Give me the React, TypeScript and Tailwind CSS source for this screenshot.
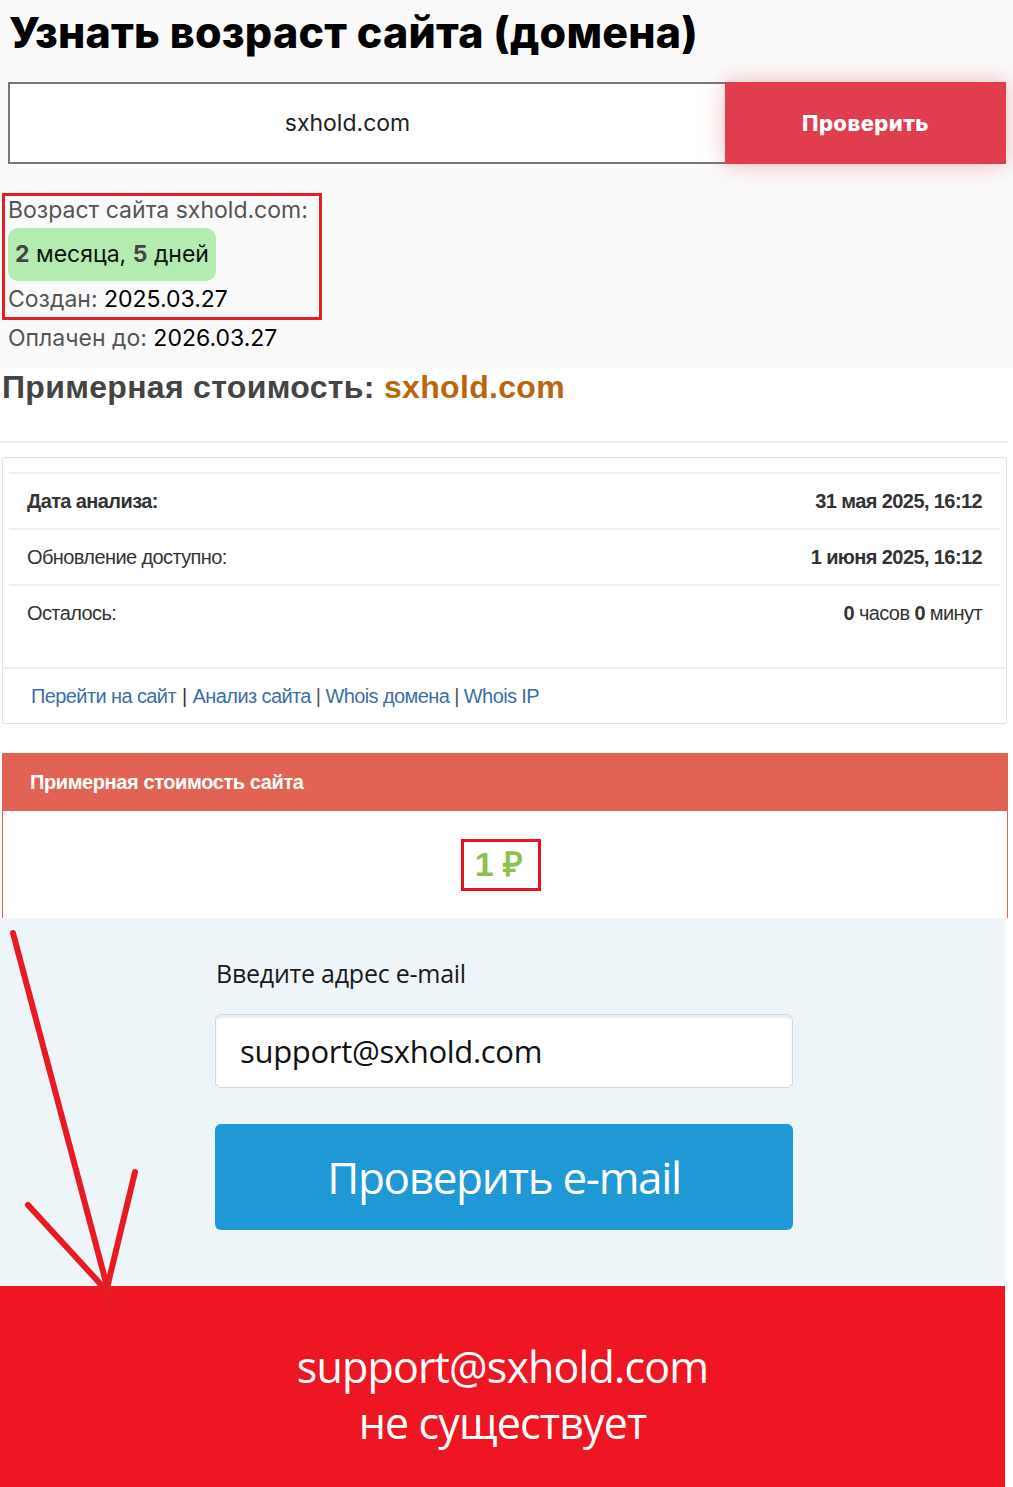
import React from 'react';

const rows = [
  { label: 'Дата анализа:', bold: true, value: <b>31 мая 2025, 16:12</b> },
  { label: 'Обновление доступно:', bold: false, value: <b>1 июня 2025, 16:12</b> },
  {
    label: 'Осталось:',
    bold: false,
    value: (
      <>
        <b>0</b> часов <b>0</b> минут
      </>
    ),
  },
];

function Arrow() {
  return (
    <svg
      className="pointer-events-none absolute left-0 top-0"
      width="160"
      height="1487"
      viewBox="0 0 160 1487"
      fill="none"
    >
      <g stroke="#e81b25" strokeWidth="6" strokeLinecap="round" strokeLinejoin="round">
        <path d="M13 933 L108 1290 L112 1310" />
        <path d="M135 1172 L106 1292" />
        <path d="M28 1205 L106 1290" />
      </g>
    </svg>
  );
}

export default function App() {
  return (
    <div className="relative w-[1013px] bg-white">
      {/* age checker */}
      <section className="bg-[#fafafa] pt-2 pb-4 font-['Inter',sans-serif]">
        <h1 className="pl-[9px] text-[43px] font-extrabold leading-[48px] tracking-[0.005em] text-black">
          Узнать возраст сайта (домена)
        </h1>
        <div className="mt-[26px] ml-2 flex h-[82px] w-[998px]">
          <div className="flex flex-1 items-center justify-center border-2 border-r-0 border-[#777] bg-white pr-10 text-[23px] text-[#222]">
            sxhold.com
          </div>
          <button className="w-[281px] bg-[#e03d4e] text-[22px] font-extrabold tracking-[0.02em] text-white shadow-[0_0_22px_rgba(224,61,78,0.35)]">
            Проверить
          </button>
        </div>

        <div className="mt-[29px] ml-[2px] w-[320px] border-[3px] border-[#e31e24] pl-[3px] pb-[4px] text-[23px] text-[#555]">
          <div className="leading-[28px]">Возраст сайта sxhold.com:</div>
          <div className="mt-1 inline-flex h-[53px] items-center rounded-[10px] bg-[#b3ebb1] px-[7px] text-[#111]">
            <b className="text-[#444]">2</b>&nbsp;месяца,&nbsp;<b className="text-[#444]">5</b>&nbsp;дней
          </div>
          <div className="mt-1 leading-[28px]">
            Создан: <span className="text-black">2025.03.27</span>
          </div>
        </div>
        <div className="mt-[4px] pl-2 text-[23px] leading-[28px] text-[#555]">
          Оплачен до: <span className="text-black">2026.03.27</span>
        </div>
      </section>

      {/* estimated price */}
      <section className="font-['Liberation_Sans',Arial,sans-serif]">
        <h2 className="pl-[2px] text-[32px] font-bold leading-[38px] tracking-[0.01em] text-[#444]">
          Примерная стоимость: <span className="text-[#bb660e]">sxhold.com</span>
        </h2>
        <div className="mt-[35px] h-[2px] w-[1008px] bg-[#ececec]" />

        <div className="mt-[14px] ml-[2px] w-[1005px] rounded-[2px] border border-[#e2e2e2] text-[20px] tracking-[-0.03em] text-[#333]">
          <div className="px-[6px] pt-[14px] pb-[27px]">
            {rows.map((r) => (
              <div
                key={r.label}
                className="flex h-[56px] items-center justify-between border-t-2 border-[#eeeeee] px-[18px]"
              >
                <span className={r.bold ? 'font-bold' : ''}>{r.label}</span>
                <span>{r.value}</span>
              </div>
            ))}
          </div>
          <div className="flex h-[56px] items-center border-t-2 border-[#efefef] pl-[28px] text-[20px] text-[#3d6ea8]">
            <span>Перейти на сайт</span>
            <span className="mx-[6px] text-[#333]">|</span>
            <span>Анализ сайта</span>
            <span className="mx-[5px] text-[#555]">|</span>
            <span>Whois домена</span>
            <span className="mx-[5px] text-[#555]">|</span>
            <span>Whois IP</span>
          </div>
        </div>

        <div className="mt-[29px] ml-[2px] w-[1006px]">
          <div className="flex h-[58px] items-center bg-[#e26353] pl-[28px] text-[20px] font-bold tracking-[-0.02em] text-white">
            Примерная стоимость сайта
          </div>
          <div className="flex h-[107px] items-center justify-center border-x border-[#e26353] bg-white">
            <div className="mr-[8px] flex h-[52px] w-[80px] items-center justify-center border-[3px] border-[#e3141f] pr-[4px] text-[34px] font-bold text-[#8cc152]">
              1&nbsp;₽
            </div>
          </div>
        </div>
      </section>

      {/* e-mail check */}
      <section className="w-[1005px] bg-[#eef5f9] pt-[38px] pb-[56px] font-['Open_Sans',sans-serif]">
        <div className="ml-[215px] w-[578px]">
          <div className="pl-[1px] text-[25px] leading-[34px] tracking-[-0.01em] text-[#1a1a1a]">
            Введите адрес e-mail
          </div>
          <div className="mt-[24px] flex h-[74px] items-center rounded-md border border-[#d6d6d6] bg-white pl-6 text-[31px] tracking-[-0.01em] text-[#111] shadow-[inset_0_3px_2px_rgba(0,0,0,0.08)]">
            support@sxhold.com
          </div>
          <button className="mt-9 flex h-[106px] w-full items-center justify-center rounded-md bg-[#1f99d5] text-[44px] tracking-[-0.03em] text-white">
            Проверить e-mail
          </button>
        </div>
      </section>

      <section className="flex h-[201px] w-[1005px] flex-col items-center justify-center bg-[#ee1622] pt-[16px] font-['Open_Sans',sans-serif] text-white">
        <div className="text-[43px] leading-[56px] tracking-[-0.02em]">support@sxhold.com</div>
        <div className="text-[43px] leading-[56px] tracking-[-0.02em]">не существует</div>
      </section>

      <Arrow />
    </div>
  );
}
